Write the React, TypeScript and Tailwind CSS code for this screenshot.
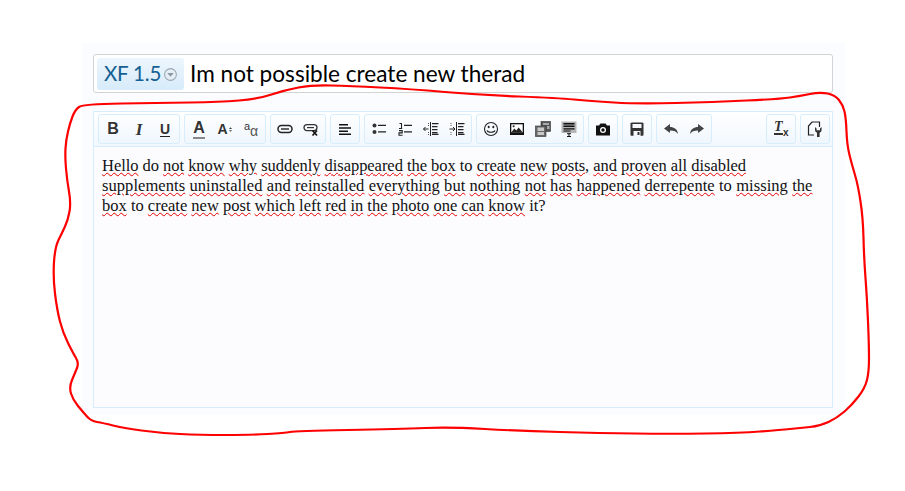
import React from "react";

// hand traced outline of the red marker scribble
const scribble: [number, number][] = [
  [160, 103], [83, 104], [75, 110], [70, 123], [66, 140], [65, 157], [67, 180], [71, 203], [68, 220], [62, 233],
  [55, 247], [53, 277], [57, 310], [63, 333], [73, 353], [79, 363], [75, 373], [69, 387], [73, 400], [83, 412],
  [91, 421], [103, 423], [123, 428], [160, 433], [200, 435], [250, 435], [285, 433], [295, 431], [400, 429], [450, 427],
  [520, 431], [600, 433], [670, 434], [740, 433], [780, 430], [800, 428], [820, 426], [837, 418], [852, 405], [865, 388],
  [869, 372], [869, 345], [867, 298], [864, 258], [863, 218], [858, 185], [852, 165], [847, 145], [846, 118], [843, 105],
  [835, 95], [820, 92], [800, 96], [780, 99], [713, 102], [638, 104], [590, 101], [558, 98], [480, 95], [410, 89],
  [350, 86], [312, 85], [285, 90], [258, 99], [220, 102],
];

function smooth(points: [number, number][]) {
  const mid = (a: [number, number], b: [number, number]) => [(a[0] + b[0]) / 2, (a[1] + b[1]) / 2];
  const start = mid(points[points.length - 1], points[0]);
  let d = `M${start[0]} ${start[1]}`;
  points.forEach((p, i) => {
    const m = mid(p, points[(i + 1) % points.length]);
    d += ` Q${p[0]} ${p[1]} ${m[0]} ${m[1]}`;
  });
  return d + "Z";
}

const Btn = ({ children }: { children: React.ReactNode }) => (
  <div className="flex h-[28px] w-[26px] items-center justify-center text-[#333]">{children}</div>
);

const Group = ({ children, className = "" }: { children: React.ReactNode; className?: string }) => (
  <div className={`flex h-[30px] rounded-[3px] border border-[#d7edfc] bg-gradient-to-b from-[#fdfeff] to-[#eff7fd] px-px ${className}`}>
    {children}
  </div>
);

const Icon = ({ children, size = 16 }: { children: React.ReactNode; size?: number }) => (
  <svg width={size} height={size} viewBox="0 0 16 16">{children}</svg>
);

const W = ({ children }: { children: React.ReactNode }) => (
  <span className="underline decoration-[#e60000] decoration-wavy decoration-1 underline-offset-1">{children}</span>
);

const Line = ({ text, className = "" }: { text: string; className?: string }) => (
  <div className={`h-[20px] whitespace-nowrap ${className}`}>
    {text.split(" ").map((w, i) => (
      <React.Fragment key={i}>
        {i > 0 && " "}
        {w.startsWith("~") ? w.slice(1) : <W>{w}</W>}
      </React.Fragment>
    ))}
  </div>
);

const glyph = "font-['Liberation_Sans',sans-serif] leading-none";

export default function App() {
  return (
    <div className="relative h-[491px] w-[905px] overflow-hidden bg-white">
      <div className="pl-[82px] pt-[43px]">
        <div className="h-[372px] w-[763px] bg-[#fbfcff] pl-[11px] pr-[12px] pt-[11px]">
          {/* title row */}
          <div className="flex h-[39px] items-center rounded-[3px] border border-[#d3d3d3] bg-white pl-[3px]">
            <div className="flex h-[32px] w-[87px] items-center rounded-[3px] bg-gradient-to-b from-[#edf6fd] to-[#d7ebfa] pl-[7px]">
              <span className="font-['Lato',sans-serif] text-[20.5px] leading-none tracking-[-0.2px] text-[#176093]">XF 1.5</span>
              <svg width="15" height="15" viewBox="0 0 14 14" className="ml-[2px] mt-[1px]">
                <circle cx="7" cy="7" r="5.5" fill="#e6eef5" stroke="#9aa7b2" />
                <path d="M4 5.5h6L7 9z" fill="#8a98a5" />
              </svg>
            </div>
            <span className="ml-[6px] mt-[1px] font-['Lato',sans-serif] text-[22.6px] leading-none text-black">Im not possible create new therad</span>
          </div>

          {/* editor */}
          <div className="mt-[18px] h-[297px] border border-[#d7edfc] bg-[#fcfcff]">
            <div className="flex h-[35px] items-center gap-[4px] border-b border-[#d7edfc] bg-gradient-to-b from-white to-[#f1f8fe] pl-[4px] pr-[2px]">
              <Group>
                <Btn><span className={`${glyph} text-[16px] font-bold`}>B</span></Btn>
                <Btn><span className={`font-['Liberation_Serif',serif] text-[17px] font-bold italic leading-none`}>I</span></Btn>
                <Btn><span className={`${glyph} border-b border-[#222] text-[14px] font-bold`}>U</span></Btn>
              </Group>
              <Group>
                <Btn><span className={`${glyph} border-b-2 border-[#888] pb-px text-[16px] font-bold`}>A</span></Btn>
                <Btn>
                  <span className={`${glyph} text-[14px] font-bold`}>A</span>
                  <Icon size={5}><path d="M8 1l5 5H3zM8 15l5-5H3z" fill="#444" /></Icon>
                </Btn>
                <Btn>
                  <div className="flex items-end">
                    <span className={`${glyph} mb-[6px] text-[11px]`}>a</span>
                    <span className={`${glyph} text-[14px] text-[#555]`}>α</span>
                  </div>
                </Btn>
              </Group>
              <Group>
                <Btn>
                  <Icon>
                    <rect x="1" y="4.600" width="14" height="6.800" rx="3.400" fill="none" stroke="#222" strokeWidth="1.500" />
                    <path d="M4 8h8" stroke="#222" strokeWidth="1.400" />
                  </Icon>
                </Btn>
                <Btn>
                  <Icon>
                    <rect x="1" y="3.600" width="13" height="6" rx="3" fill="none" stroke="#333" strokeWidth="1.300" />
                    <path d="M4 6.600h7" stroke="#333" strokeWidth="1.200" />
                    <path d="M9.500 9.500l4.500 5M14 9.500l-4.500 5" stroke="#111" strokeWidth="1.700" />
                  </Icon>
                </Btn>
              </Group>
              <Group>
                <Btn>
                  <Icon><path d="M2 3h9v1.600H2zM2 6.200h12v1.600H2zM2 9.400h9V11H2zM2 12.400h12V14H2z" fill="#111" /></Icon>
                </Btn>
              </Group>
              <Group>
                <Btn>
                  <Icon>
                    <circle cx="3.500" cy="4.500" r="2" fill="#333" /><circle cx="3.500" cy="11" r="2" fill="#333" />
                    <path d="M7 3.700h8v1.400H7zM7 10.200h8v1.400H7z" fill="#222" />
                  </Icon>
                </Btn>
                <Btn>
                  <Icon>
                    <path d="M2.500 2.500h2v5M2 7.500h3.200" fill="none" stroke="#222" strokeWidth="1.100" />
                    <path d="M2 9.600h3.200v2.300H2v2.400h3.600" fill="none" stroke="#222" strokeWidth="1.100" />
                    <path d="M7 3.700h8v1.400H7zM7 10.200h8v1.400H7z" fill="#222" />
                  </Icon>
                </Btn>
                <Btn>
                  <Icon>
                    <path d="M9 2h6.500v1.200H9zM9 5h5.500v1.200H9zM9 8h5.500v1.200H9zM9 11h5.500v1.200H9zM9 14h6.500v-1.200H9z" fill="#222" />
                    <path d="M7.500 1v14" stroke="#222" strokeWidth="1" />
                    <path d="M5.500 8H.5M2.500 6l-2 2 2 2" fill="none" stroke="#222" strokeWidth="1" />
                    <path d="M5.500 2v3M5.500 11v3" stroke="#555" strokeWidth="1" strokeDasharray="1 1" />
                  </Icon>
                </Btn>
                <Btn>
                  <Icon>
                    <path d="M9 2h6.500v1.200H9zM9 5h5.500v1.200H9zM9 8h5.500v1.200H9zM9 11h5.500v1.200H9zM9 14h6.500v-1.200H9z" fill="#222" />
                    <path d="M7.500 1v14" stroke="#222" strokeWidth="1" />
                    <path d="M.5 8h5.500M4 6l2 2-2 2" fill="none" stroke="#222" strokeWidth="1" />
                    <path d="M2 2v3M2 11v3" stroke="#555" strokeWidth="1" strokeDasharray="1 1" />
                  </Icon>
                </Btn>
              </Group>
              <Group>
                <Btn>
                  <Icon>
                    <circle cx="8" cy="8" r="6.500" fill="none" stroke="#222" strokeWidth="1.100" />
                    <ellipse cx="5.700" cy="6" rx="1" ry="1.300" fill="#222" /><ellipse cx="10.300" cy="6" rx="1" ry="1.300" fill="#222" />
                    <path d="M4 9.500c1 2.400 7 2.400 8 0" fill="none" stroke="#222" strokeWidth="1.100" />
                  </Icon>
                </Btn>
                <Btn>
                  <Icon>
                    <rect x="1" y="2" width="14" height="12" fill="#111" />
                    <rect x="2.300" y="3.300" width="11.400" height="8" fill="#fff" />
                    <path d="M2.300 11.500l3-4 2 2 2.400-3 4 5z" fill="#222" />
                    <circle cx="4.600" cy="5.200" r="1" fill="#222" />
                  </Icon>
                </Btn>
                <Btn>
                  <Icon>
                    <rect x="6" y="0.500" width="9.500" height="10" fill="#555" stroke="#333" strokeWidth="0.600" />
                    <rect x="0.500" y="5" width="10.500" height="10.500" fill="#666" stroke="#333" strokeWidth="0.600" />
                    <path d="M2.500 6.500h6.500v3.500H2.500zM2.500 11h6.500v3H2.500z" fill="#c8c8c8" />
                    <path d="M8 2h6v2H8zM12 5h2.500v3H12z" fill="#aaa" />
                  </Icon>
                </Btn>
                <Btn>
                  <Icon>
                    <rect x="0.500" y="0.500" width="15" height="11.500" fill="#b5b5b5" />
                    <path d="M2.500 2h11v1.400h-11zM2.500 4.600h11V6h-11zM2.500 7.200h11v1.400h-11zM2.500 9.600h7v1h-7z" fill="#111" />
                    <path d="M6 12.700h4M8 12.700v2.800M6 15.500h4" stroke="#111" strokeWidth="1" fill="none" />
                  </Icon>
                </Btn>
              </Group>
              <Group>
                <Btn>
                  <Icon>
                    <path d="M5.500 2.500h5L12 4.500h3v10H1v-10h3z" fill="#111" />
                    <circle cx="8" cy="9" r="3" fill="#fff" />
                    <circle cx="8" cy="9" r="1.700" fill="#111" />
                  </Icon>
                </Btn>
              </Group>
              <Group>
                <Btn>
                  <Icon>
                    <path d="M2.500 1.500h11l1 1v11.500a.8.8 0 01-.8.8H2.300a.8.8 0 01-.8-.8V2.500z" fill="#333" />
                    <rect x="3.500" y="3" width="9" height="4" fill="#f5f9fd" />
                    <rect x="4.500" y="10" width="7" height="5" fill="#f5f9fd" />
                    <rect x="8.500" y="11" width="2" height="3" fill="#333" />
                  </Icon>
                </Btn>
              </Group>
              <Group>
                <Btn>
                  <Icon><path d="M1 7.500L7 3v3c4 0 7.500 2 8 7-1.500-2.500-4-3.500-8-3.500V12z" fill="#444" /></Icon>
                </Btn>
                <Btn>
                  <Icon><path d="M15 7.500L9 3v3C5 6 1.500 8 1 13c1.500-2.500 4-3.500 8-3.500V12z" fill="#444" /></Icon>
                </Btn>
              </Group>
              <Group className="ml-auto">
                <Btn>
                  <div className="relative h-[16px] w-[16px]">
                    <span className="absolute left-[1px] top-[-1px] border-b-2 border-[#333] font-['Liberation_Serif',serif] text-[14px] font-bold italic leading-[13px]">T</span>
                    <span className={`${glyph} absolute left-[10px] top-[7px] text-[10px] font-bold`}>x</span>
                  </div>
                </Btn>
              </Group>
              <Group>
                <Btn>
                  <Icon>
                    <path d="M12.500 6V1H5L1.500 5V14H7" fill="none" stroke="#222" strokeWidth="1.200" />
                    <path d="M8 6v3.200a2.800 2.800 0 002 2.500v4.300h2.600v-4.300a2.800 2.800 0 002-2.500V6l-1.600 1.600v1.600h-3.400V7.600z" fill="#333" />
                  </Icon>
                </Btn>
              </Group>
            </div>
            <div className="px-[8px] pt-[9px] font-['Liberation_Serif',serif] text-[16.500px] leading-[20px] text-[#111]">
              <Line className="tracking-[-0.04px]" text="Hello ~do not know why suddenly disappeared the box ~to create new posts, and proven all disabled" />
              <Line className="tracking-[0.065px]" text="supplements uninstalled and reinstalled everything but nothing not has happened derrepente ~to missing the" />
              <Line text="box ~to create new post which left red in the photo one can know ~it?" />
            </div>
          </div>
        </div>
      </div>

      <svg width="905" height="491" className="pointer-events-none absolute left-0 top-0">
        <path d={smooth(scribble)} fill="none" stroke="#f00" strokeWidth="2.200" />
      </svg>
    </div>
  );
}
